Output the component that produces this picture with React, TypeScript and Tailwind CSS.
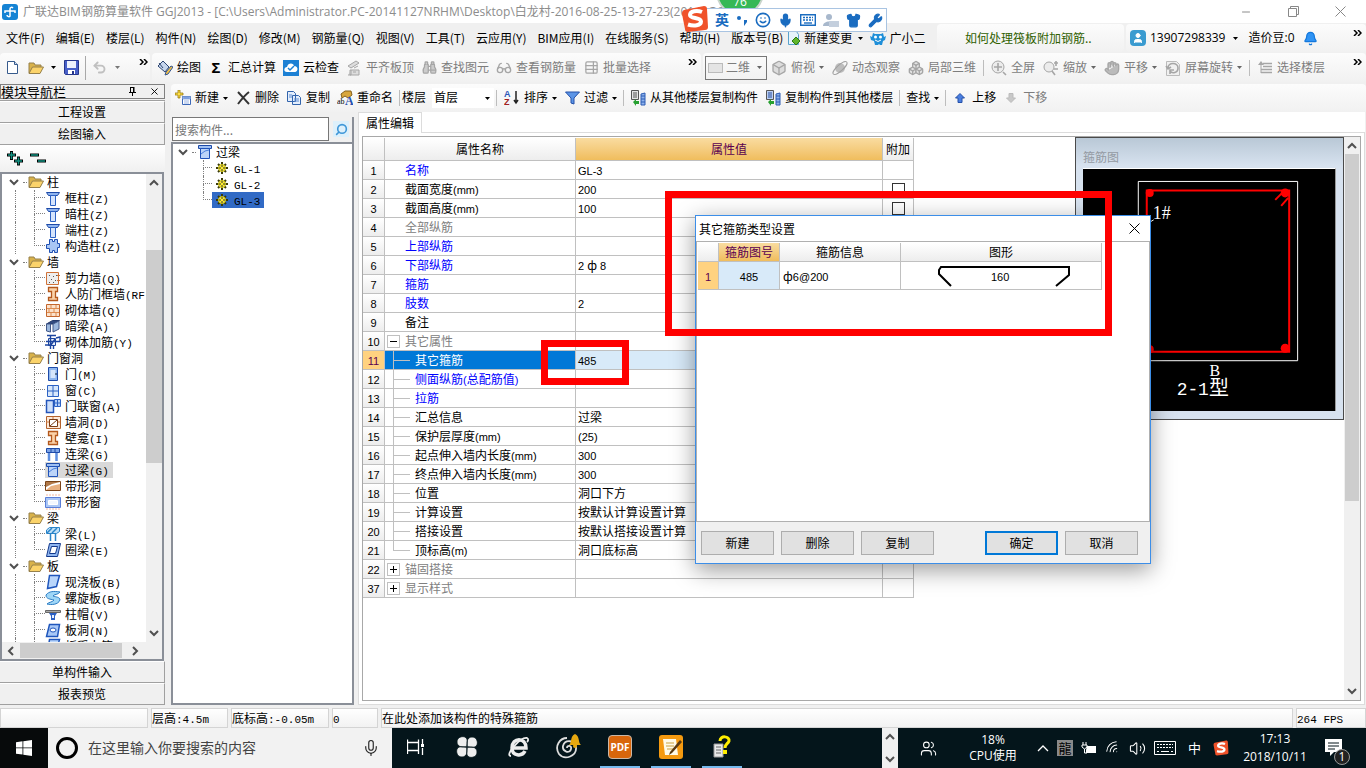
import React, { useState } from 'react';
import { Bell, Binoculars, Box, Boxes, Glasses, Hand, Mic, Minus, Search, Shirt, Smile, TableProperties, Undo2, User, Users, Volume2, Wifi, Wrench, X } from 'lucide-react';

const UI = "font-['Open_Sans','Noto_Sans_CJK_SC',sans-serif]";
const SONG = "font-['Noto_Sans_CJK_SC',sans-serif]";

// half-width characters are set a size smaller than the full-width ones
const Song: React.FC<{ text: string; mono?: boolean }> = ({ text, mono }) => (
  <span className="whitespace-pre">
    {text.split(/([\x20-\x7e]+)/).map((part, i) =>
      i % 2 ? (
        <span key={i} className={mono ? "font-['Liberation_Mono',monospace] text-[11px] leading-none" : "font-['Liberation_Sans',sans-serif] text-[11px] leading-none"}>{part}</span>
      ) : part
    )}
  </span>
);

const Caret: React.FC<{ className?: string }> = ({ className = 'text-black' }) => (
  <svg width="5" height="3" viewBox="0 0 5 3" className={`shrink-0 ${className}`}><path d="M0 0h5L2.5 3z" fill="currentColor" /></svg>
);

const More = () => (
  <svg width="9" height="6" viewBox="0 0 9 6" className="mt-[6px] shrink-0 self-start"><path d="M1 0l3 3-3 3M5 0l3 3-3 3" fill="none" stroke="#000" strokeWidth="1.5" /></svg>
);

const Chevron: React.FC<{ dir?: 'down' | 'up' | 'left' | 'right' }> = ({ dir = 'down' }) => {
  const d = { down: 'M1 3l4 4 4-4', up: 'M1 7l4-4 4 4', left: 'M7 1L3 5l4 4', right: 'M3 1l4 4-4 4' }[dir];
  return <svg width="10" height="10" viewBox="0 0 10 10" className="shrink-0"><path d={d} fill="none" stroke="#505050" strokeWidth="2" /></svg>;
};

const Sep = () => <span className="-mx-px h-4 w-px shrink-0 bg-[#bdbdbd]" />;

const Folder = () => (
  <svg width="16" height="16" viewBox="0 0 16 16" className="shrink-0">
    <path d="M1 13V3h5l1 2h6v3" fill="#d9b24a" stroke="#96804a" />
    <path d="M1 13.5L4.5 7H15.5L12 13.5z" fill="#fbd36a" stroke="#96804a" />
  </svg>
);

type Kind = 'column' | 'gz' | 'wall' | 'iwall' | 'brick' | 'beam' | 'rebar' | 'door' | 'window' | 'doorwin' | 'hole' | 'link' | 'lintel' | 'striphole' | 'stripwin' | 'truss' | 'ring' | 'slab' | 'spiral' | 'cap' | 'slabhole';

const ART: Record<Kind, React.ReactNode> = {
  column: <><path d="M1.5 2.5h13l-2 3h-9z" fill="#8fb4ee" stroke="#1d4aa8" /><path d="M5.5 5.5h5v10h-5z" fill="#d5e4fc" stroke="#2c62c4" /></>,
  gz: <path d="M4.5 1.5h3v2h2v-2h3v4h2v4h-2v5h-3v-2h-2v2h-3v-4h-3v-4h3z" fill="#a9c7f4" stroke="#1f50b4" />,
  wall: <><path d="M1.5 2.5h12v12h-12z" fill="#eee" stroke="#d07238" /><path d="M4 5.5h1M8 6.5h1M6 9.5h1M10 10.5h1M4 12.5h1M8 12.5h1M11 5.5h1" stroke="#555" /><path d="M12 5.5h3M12 10.5h3" stroke="#d07238" /></>,
  iwall: <path d="M3.5 1.5h9v4h-2v6h2v3h-9v-3h3v-6h-3z" fill="#fbd2a8" stroke="#b4581c" strokeWidth="1.3" />,
  brick: <><path d="M1.5 2.5h13v12h-13z" fill="#fbe2cc" stroke="#c4662c" /><path d="M2 6.5h12M2 10.5h12M6 3v3M11 3v3M4 7v3M9 7v3M6 11v3M11 11v3" stroke="#dd8c50" /></>,
  beam: <><path d="M1.5 6l6-3.5h7L8 6z" fill="#304a80" stroke="#25396a" /><path d="M1.5 6h4v8l-4-1zM8 6l6-3v8l-6 3z" fill="#9cb8de" stroke="#42598a" /></>,
  rebar: <><path d="M3.5 4.5h7v7h-7z" fill="#e4eefc" stroke="#1d46a0" /><path d="M2 1.5h9M1 7.5h14M5.5 1v14M8.5 11v4M11 4l4-1v5M0 11h6l4-6" fill="none" stroke="#1d46a0" strokeWidth="1.4" /></>,
  door: <><path d="M3.5 1.5h9v13h-9z" fill="#8db5ee" stroke="#1d4aa8" /><path d="M5.5 4h5v8h-5z" fill="#d6e6fb" /><path d="M10 8h2" stroke="#123" /></>,
  window: <><path d="M2.5 3.5h11v11h-11z" fill="#d8e8fc" stroke="#2c62c4" /><path d="M8 4v10M3 9h10" stroke="#2c62c4" /></>,
  doorwin: <><path d="M1.5 2.5h7v12h-7z" fill="#cfe0fa" stroke="#2455ba" strokeWidth="1.5" /><path d="M9.5 1.5h6v7h-6z" fill="#b6d0f7" stroke="#2c62c4" /><path d="M12.5 1v8M9 5h6" stroke="#2c62c4" /></>,
  hole: <><path d="M1.5 2.5h14v12h-14z" fill="#fde9d8" stroke="#b4622c" /><path d="M4.5 5.5h8v7h-8zM5 12l7-6" fill="#fff" stroke="#7a3c14" /><path d="M1 8h3M13 8h2M8 3v2" stroke="#d07a40" /></>,
  link: <><path d="M1.5 2.5h13v4h-13z" fill="#7da4e6" stroke="#1d4aa8" /><path d="M4 7v8M11.5 7v8" stroke="#5e8fe0" strokeWidth="2.5" /><path d="M6 2v4M10 2v4" stroke="#1d4aa8" /></>,
  lintel: <><path d="M1.5 1.5h13v3h-13z" fill="#9fc0f2" stroke="#1d4aa8" /><path d="M3.5 4.5h9v10h-9z" fill="#bcd4f8" stroke="#1f52b8" /><path d="M4 10l4-3 4-1" stroke="#4a80dc" fill="none" /></>,
  striphole: <><path d="M.5 3.5h15v9h-15z" fill="#fff" stroke="#7a4418" /><path d="M1 9l6-3 8-2H1z" fill="#b07848" /><path d="M1 12l5-4 9-2v6z" fill="#e8b080" /></>,
  stripwin: <><path d="M.5 3.5h15v10h-15z" fill="#aac6f5" stroke="#5a7ed8" /><path d="M3.5 6.5h9v4h-9z" fill="#f2f7ff" stroke="#fff" /><path d="M1 1h14M1 15h14" stroke="#f6b8a0" strokeDasharray="2 1" /></>,
  truss: <><path d="M1.5 4l3-2.5h10v4l-3 2h-10z" fill="#bfe0f8" stroke="#2a84c8" /><path d="M5.5 8v7M10.5 8v7M2 7l5-5M7 7l5-5" stroke="#2a84c8" strokeWidth="1.5" /></>,
  ring: <path d="M4.5 1.5h11l-3 13h-11zM6.5 4.5l-2 7h6l2-7z" fill="#8fb6f0" fillRule="evenodd" stroke="#12388c" />,
  slab: <path d="M4.5 1.5h10l-3 11-9 2z" fill="#b9d6fb" stroke="#1f56bc" strokeWidth="1.5" />,
  spiral: <path d="M1 5c3-4 8-4 14-3-2 3-6 2-7 4 3 1 7 1 7 4-2 5-9 5-13 4 2-2 6-2 7-4C5 9 1 9 1 5z" fill="#9ed6f7" stroke="#2a7cc4" />,
  cap: <><path d="M.5 4.5h15v2h-15z" fill="#aaa" stroke="#666" /><path d="M4 7h8l-2 3v4H6v-4z" fill="#2a5fc4" /><path d="M7 9h2v3H7z" fill="#e8f1ff" /></>,
  slabhole: <><path d="M4.5 2.5h10l-2 12h-11z" fill="#a8c8f7" stroke="#1f56bc" strokeWidth="1.5" /><ellipse cx="8" cy="8" rx="3" ry="2" fill="#fff" stroke="#1f56bc" /></>,
};

const Art: React.FC<{ kind: Kind }> = ({ kind }) => <svg width="16" height="16" viewBox="0 0 16 16" className="shrink-0">{ART[kind]}</svg>;

const TREE: { label: string; items: [string, Kind][] }[] = [
  { label: '柱', items: [['框柱(Z)', 'column'], ['暗柱(Z)', 'column'], ['端柱(Z)', 'column'], ['构造柱(Z)', 'gz']] },
  { label: '墙', items: [['剪力墙(Q)', 'wall'], ['人防门框墙(RF', 'iwall'], ['砌体墙(Q)', 'brick'], ['暗梁(A)', 'beam'], ['砌体加筋(Y)', 'rebar']] },
  { label: '门窗洞', items: [['门(M)', 'door'], ['窗(C)', 'window'], ['门联窗(A)', 'doorwin'], ['墙洞(D)', 'hole'], ['壁龛(I)', 'iwall'], ['连梁(G)', 'link'], ['过梁(G)', 'lintel'], ['带形洞', 'striphole'], ['带形窗', 'stripwin']] },
  { label: '梁', items: [['梁(L)', 'truss'], ['圈梁(E)', 'ring']] },
  { label: '板', items: [['现浇板(B)', 'slab'], ['螺旋板(B)', 'spiral'], ['柱帽(V)', 'cap'], ['板洞(N)', 'slabhole'], ['板受力筋(S)', 'slab']] },
];

interface Prop { no: number; name: string; value?: string; tone?: 'blue' | 'gray'; box?: boolean; group?: '+' | '-'; child?: boolean }

const PROPS: Prop[] = [
  { no: 1, name: '名称', value: 'GL-3', tone: 'blue' },
  { no: 2, name: '截面宽度(mm)', value: '200', box: true },
  { no: 3, name: '截面高度(mm)', value: '100', box: true },
  { no: 4, name: '全部纵筋', tone: 'gray' },
  { no: 5, name: '上部纵筋', tone: 'blue' },
  { no: 6, name: '下部纵筋', value: '2 ф 8', tone: 'blue' },
  { no: 7, name: '箍筋', tone: 'blue' },
  { no: 8, name: '肢数', value: '2', tone: 'blue' },
  { no: 9, name: '备注' },
  { no: 10, name: '其它属性', tone: 'gray', group: '-' },
  { no: 11, name: '其它箍筋', value: '485', child: true },
  { no: 12, name: '侧面纵筋(总配筋值)', tone: 'blue', child: true },
  { no: 13, name: '拉筋', tone: 'blue', child: true },
  { no: 14, name: '汇总信息', value: '过梁', child: true },
  { no: 15, name: '保护层厚度(mm)', value: '(25)', child: true },
  { no: 16, name: '起点伸入墙内长度(mm)', value: '300', child: true },
  { no: 17, name: '终点伸入墙内长度(mm)', value: '300', child: true },
  { no: 18, name: '位置', value: '洞口下方', child: true },
  { no: 19, name: '计算设置', value: '按默认计算设置计算', child: true },
  { no: 20, name: '搭接设置', value: '按默认搭接设置计算', child: true },
  { no: 21, name: '顶标高(m)', value: '洞口底标高', child: true },
  { no: 22, name: '锚固搭接', tone: 'gray', group: '+' },
  { no: 37, name: '显示样式', tone: 'gray', group: '+' },
];

const MENUS = ['文件(F)', '编辑(E)', '楼层(L)', '构件(N)', '绘图(D)', '修改(M)', '钢筋量(Q)', '视图(V)', '工具(T)', '云应用(Y)', 'BIM应用(I)', '在线服务(S)', '帮助(H)', '版本号(B)'];

const Tool: React.FC<{ icon?: React.ReactNode; label: string; drop?: boolean; off?: boolean }> = ({ icon, label, drop, off }) => (
  <button className={`flex shrink-0 items-center gap-1 whitespace-nowrap ${off ? 'text-[#7d7d7d]' : 'text-black'}`}>
    {icon && <span className="flex w-4 shrink-0 justify-center">{icon}</span>}
    {label}
    {drop && <Caret className={off ? 'text-[#666]' : 'text-black'} />}
  </button>
);

const SogouS: React.FC<{ size: number }> = ({ size }) => (
  <svg width={size} height={size} viewBox="0 0 28 28" className="shrink-0">
    <path d="M3 5L23 1c2 0 3 1 3 3l1 18c0 2-1 3-3 3L7 27c-2 0-3-1-3-3L1 9c0-2 0-3 2-4z" fill="#f0522a" />
    <path d="M21 7c-5-2-12-1-12 3 0 4 11 2 11 6.5 0 4-7 5-13 3" fill="none" stroke="#fff" strokeWidth="4" />
  </svg>
);

const CopyFloor: React.FC<{ flip?: boolean }> = ({ flip }) => (
  <svg width="16" height="16" viewBox="0 0 16 16">
    <path d="M1.5.5h7v9h-7z" fill={flip ? '#bcd0f4' : '#e4e4e4'} stroke="#555" /><path d="M3 3h4M3 5h4M3 7h4" stroke={flip ? '#244c9c' : '#555'} />
    <path d="M11 4l4-1v12h-4zM11 6h4M11 9h4M11 12h4" fill="#8db2ec" stroke="#2c5db4" />
    <path d="M3 12l3-3v2h3v3H6v2z" fill="#27a030" />
  </svg>
);

const NavTree = () => {
  const [sel, setSel] = useState('过梁(G)');
  return (
    <ul className="min-w-0 flex-1 overflow-hidden text-[12px] leading-4">
      {TREE.map(g => (
        <li key={g.label}>
          <button className="flex h-4 items-center pl-[7px]">
            <Chevron />
            <span className="ml-1 mr-px w-1 border-t border-dotted border-[#808080]" />
            <Folder />
            <span className="ml-[3px]">{g.label}</span>
          </button>
          <ul>
            {g.items.map(([label, kind], i) => (
              <li key={label} className="flex h-4 pl-[13px]">
                <span className="w-[19px] shrink-0 border-l border-dotted border-[#808080]" />
                <span className="flex w-[11px] shrink-0 flex-col">
                  <span className="h-2 border-b border-l border-dotted border-[#808080]" />
                  {i < g.items.length - 1 && <span className="h-2 border-l border-dotted border-[#808080]" />}
                </span>
                <button onClick={() => setSel(label)} className={`flex items-center gap-1 whitespace-nowrap pr-1 ${sel === label ? 'bg-[#d9d9d9]' : ''}`}>
                  <Art kind={kind} />
                  <Song text={label} mono />
                </button>
              </li>
            ))}
          </ul>
        </li>
      ))}
    </ul>
  );
};

const SideButton: React.FC<{ label: string }> = ({ label }) => (
  <button className="h-[22px] shrink-0 border-b border-r border-t border-b-[#a0a0a0] border-r-[#a0a0a0] border-t-white bg-[#f0f0f0] text-[12px] leading-none">{label}</button>
);

const Sidebar = () => (
  <aside className={`flex w-[165px] shrink-0 flex-col pb-[3px] ${SONG}`}>
    <div className="flex h-[15px] shrink-0 items-center border border-[#808080]">
      <h2 className="flex-1 text-[13px] leading-none">模块导航栏</h2>
      <button aria-label="固定" className="mr-3">
        <svg width="9" height="9" viewBox="0 0 9 9"><path d="M2.5 0v5M2 .5h4M5.5 0v5M1 5.5h7M4.5 6v3" fill="none" stroke="#000" /><path d="M5 0h1.5v5H5z" /></svg>
      </button>
      <button aria-label="关闭" className="mr-1"><X size={11} strokeWidth={2} /></button>
    </div>
    <div className="mt-px flex shrink-0 flex-col border-t border-[#a0a0a0]">
      <SideButton label="工程设置" />
      <SideButton label="绘图输入" />
    </div>
    <div className="flex h-[27px] shrink-0 items-center bg-linear-to-b from-white to-[#f0f0f0] pl-[7px]">
      <svg width="40" height="15" viewBox="0 0 40 15">
        <path d="M0 4h9M4.5 0v9M7 10h9M11.5 5.5v9M23 4h9M30 10h9" stroke="#000" strokeWidth="3" />
        <path d="M1 4h7M4.5 1v7M8 10h7M11.5 6.5v7M24 4h7M31 10h7" stroke="#109080" strokeWidth="1.5" />
      </svg>
    </div>
    <div className="mr-px flex min-h-0 flex-1 flex-col border-2 border-[#8a8f98] bg-white">
      <div className="flex min-h-0 flex-1">
        <NavTree />
        <div className="flex w-4 shrink-0 flex-col items-center bg-[#f0f0f0]">
          <span className="pt-1"><Chevron dir="up" /></span>
          <span className="mt-[62px] h-[213px] w-full shrink-0 bg-[#cdcdcd]" />
          <span className="mt-auto pb-1"><Chevron /></span>
        </div>
      </div>
      <div className="flex h-[17px] shrink-0 items-center bg-[#f0f0f0] pl-1">
        <Chevron dir="left" />
        <span className="ml-1 h-[15px] w-[102px] bg-[#cdcdcd]" />
        <span className="ml-2"><Chevron dir="right" /></span>
      </div>
    </div>
    <div className="flex shrink-0 flex-col">
      <SideButton label="单构件输入" />
      <SideButton label="报表预览" />
    </div>
  </aside>
);

const Gear = () => (
  <svg width="12" height="12" viewBox="0 0 12 12" className="shrink-0">
    <path d="M6 0v12M0 6h12M2 2l8 8M10 2l-8 8" stroke="#3a3a08" strokeWidth="2" />
    <circle cx="6" cy="6" r="3.5" fill="#ffee30" stroke="#c8bc18" /><path d="M6 3v2M6 7v2M3 6h2M7 6h2" stroke="#333" />
  </svg>
);

const ComponentList = () => (
  <section className={`flex w-[183px] shrink-0 flex-col ${SONG}`}>
    <div className="mt-[5px] flex h-[25px] shrink-0 items-start border-r-2 border-[#8a8f98] pl-px">
      <input aria-label="搜索构件" placeholder="搜索构件..." className="h-6 w-[157px] border border-[#777] bg-white px-[2px] text-[12px] placeholder:text-[#777]" />
      <button aria-label="搜索" className="ml-1 mt-1 flex size-4 items-center justify-center bg-[#ddf0fb]"><Search size={13} color="#3f97d8" strokeWidth={3} className="-scale-x-100" /></button>
    </div>
    <div className="min-h-0 flex-1 border-2 border-[#8a8f98] bg-white text-[12px] leading-4">
      <div className="flex h-4 items-center pl-[5px]">
        <Chevron /><span className="ml-1 mr-px w-1 border-t border-dotted border-[#808080]" /><Art kind="lintel" /><span className="ml-[3px]">过梁</span>
      </div>
      <ul>
        {['GL-1', 'GL-2', 'GL-3'].map((n, i) => (
          <li key={n} className="flex h-4 pl-[30px]">
            <span className="flex w-[9px] shrink-0 flex-col">
              <span className="h-2 border-b border-l border-dotted border-[#808080]" />
              {i < 2 && <span className="h-2 border-l border-dotted border-[#808080]" />}
            </span>
            <button className={`flex items-center gap-[6px] px-1 ${i === 2 ? 'bg-[#316ac5]' : ''}`}><Gear /><Song text={n} mono /></button>
          </li>
        ))}
      </ul>
    </div>
  </section>
);

const HEAD = 'border-b border-r border-[#c0c0c0] bg-linear-to-b from-white to-[#ededed] p-0 text-center font-normal';
const HEAD_ON = 'border-b border-r border-[#c0c0c0] bg-linear-to-b from-[#f9dca0] to-[#f0bd5c] p-0 text-center font-normal text-[#5a0050]';
const TONE = { blue: 'text-[#0000ff]', gray: 'text-[#808080]', none: 'text-black' };

const PropTable = () => (
  <table className="mt-px w-[551px] shrink-0 table-fixed border-separate border-spacing-0 self-start text-[12px] leading-4">
    <colgroup><col className="w-[22px]" /><col className="w-[191px]" /><col className="w-[307px]" /><col className="w-[31px]" /></colgroup>
    <thead>
      <tr className="h-[23px]"><th className={HEAD} /><th className={HEAD}>属性名称</th><th className={HEAD_ON}>属性值</th><th className={HEAD}>附加</th></tr>
    </thead>
    <tbody>
      {PROPS.map(p => {
        const on = p.no === 11;
        return (
          <tr key={p.no} className="h-[19px]">
            <th className={on ? 'border-b border-r border-[#c0c0c0] bg-[#ffd280] p-0 font-normal text-[#5a0050]' : HEAD}><Song text={String(p.no)} /></th>
            <td className={`h-[19px] border-b border-r border-[#c0c0c0] p-0 ${on ? 'bg-[#0078d7] text-white' : TONE[p.tone ?? 'none']}`}>
              <div className="flex h-[18px] items-center">
                {p.group && <span className="ml-[2px] mr-[5px] flex size-[13px] items-center justify-center border border-[#c0c0c0]">
                  <svg width="7" height="7" viewBox="0 0 7 7"><path d={p.group === '+' ? 'M0 3.5h7M3.5 0v7' : 'M0 3.5h7'} stroke="#000" /></svg>
                </span>}
                {p.child && (
                  <span className="ml-2 mr-[5px] flex h-full w-[17px] flex-col">
                    <span className="h-[10px] border-b border-l border-[#c0c0c0]" />
                    {p.no !== 21 && <span className="h-2 border-l border-[#c0c0c0]" />}
                  </span>
                )}
                {!p.group && !p.child && <span className="w-5" />}
                <Song text={p.name} />
              </div>
            </td>
            <td className={`border-b border-r border-[#c0c0c0] p-0 pl-[2px] ${on ? 'bg-[#d8eaf9]' : ''}`}>{p.value && <Song text={p.value} />}</td>
            <td className="border-b border-r border-[#c0c0c0] p-0">
              {p.box && <input type="checkbox" aria-label={p.name} className="mx-auto block size-[13px] appearance-none border border-[#333] bg-white" />}
            </td>
          </tr>
        );
      })}
    </tbody>
  </table>
);

const StirrupView = () => (
  <figure className="flex h-[283px] w-[269px] shrink-0 flex-col border border-[#4a4a4a] bg-[#d7e2ef] bg-linear-to-b from-[#b9c8d6] to-[#d7e2ef] to-10% px-[7px]">
    <figcaption className="h-[30px] pt-[11px] text-[12px] leading-4 text-[#949aa2]">箍筋图</figcaption>
    <svg width="253" height="243" viewBox="0 0 253 243" className="border-r border-t border-r-[#999] border-t-white bg-black">
      <path d="M55.5 12.5h160v180h-160z" fill="none" stroke="#fff" />
      <path d="M64 21.5h143v162H64z" fill="none" stroke="#f00" strokeWidth="2" />
      <g fill="#f00"><circle cx="67" cy="24" r="4" /><circle cx="203" cy="24" r="4.5" /><circle cx="67" cy="181" r="4" /><circle cx="203" cy="180" r="4.5" /></g>
      <path d="M193 31l8-8M199 37l7-8" stroke="#f00" strokeWidth="2" />
      <path d="M66 54l5-3" stroke="#fff" />
      <g fill="#fff" fontFamily="'Liberation Serif','Noto Sans CJK SC',serif">
        <text x="70" y="50" fontSize="18">1#</text>
        <text x="127" y="208" fontSize="16">B</text>
        <text x="94" y="227" fontSize="20"><tspan fontFamily="'Liberation Mono',monospace" fontSize="18">2-1</tspan>型</text>
      </g>
    </svg>
  </figure>
);

const DlgButton: React.FC<{ label: string; primary?: boolean }> = ({ label, primary }) => (
  <button className={`h-6 w-[73px] bg-[#e1e1e1] text-[12px] leading-none ${primary ? 'border-2 border-[#0078d7]' : 'border border-[#adadad]'}`}>{label}</button>
);

const StirrupDialog = () => (
  <div role="dialog" aria-label="其它箍筋类型设置" className={`absolute left-[695px] top-[215px] z-10 flex h-[349px] w-[456px] flex-col border border-[#3c8ee8] bg-[#f0f0f0] shadow-[0_6px_22px_rgba(0,0,0,0.4)] ${SONG}`}>
    <div className="flex h-[25px] items-center bg-white pl-[3px] pr-[10px] text-[12px]">
      <span className="flex-1">其它箍筋类型设置</span>
      <button aria-label="关闭"><svg width="11" height="11" viewBox="0 0 11 11"><path d="M.5.5l10 10M10.5.5l-10 10" stroke="#000" /></svg></button>
    </div>
    <div className="flex-1 border border-[#b0b0b0] bg-white pl-px pt-px">
      <table className="w-[404px] table-fixed border-separate border-spacing-0 text-[12px] leading-4">
        <colgroup><col className="w-[21px]" /><col className="w-[61px]" /><col className="w-[121px]" /><col className="w-[201px]" /></colgroup>
        <thead><tr className="h-[19px]"><th className={HEAD} /><th className={HEAD_ON}>箍筋图号</th><th className={HEAD}>箍筋信息</th><th className={HEAD}>图形</th></tr></thead>
        <tbody>
          <tr className="h-7">
            <th className="border-b border-r border-[#c0c0c0] bg-[#ffd280] p-0 font-normal text-[#5a0050]"><Song text="1" /></th>
            <td className="border-b border-r border-[#c0c0c0] bg-[#d8eaf9] p-0 text-center"><Song text="485" /></td>
            <td className="border-b border-r border-[#c0c0c0] p-0 pl-[3px]"><Song text="ф6@200" /></td>
            <td className="border-b border-r border-[#c0c0c0] p-0">
              <svg width="200" height="26" viewBox="0 0 200 26" className="block">
                <path d="M50 23L38 11V7l2-3h128v8l-13 11" fill="none" stroke="#000" strokeWidth="2" />
                <text x="90" y="18" fontSize="11" fontFamily="'Liberation Sans',sans-serif">160</text>
              </svg>
            </td>
          </tr>
        </tbody>
      </table>
    </div>
    <div className="flex h-[41px] items-center gap-[7px] pl-[5px] pr-3">
      <DlgButton label="新建" /><DlgButton label="删除" /><DlgButton label="复制" />
      <span className="flex-1" />
      <DlgButton label="确定" primary /><DlgButton label="取消" />
    </div>
  </div>
);

const ImeBar = () => (
  <div className={`absolute left-[681px] top-0 z-10 ${UI}`}>
    <div className="ml-[35px] h-[18px] w-12 overflow-hidden">
      <div className="-mt-8 flex size-12 items-end justify-center rounded-full border-2 border-[#c9d4cb] bg-[#35b856] pb-1 text-[12px] leading-4 text-white">76</div>
    </div>
    <div className="absolute left-[11px] top-2 flex h-6 w-[195px] items-center gap-[7px] border border-[#a9c4e2] bg-white pl-[22px] text-[#1a6cc0]">
      <span className="text-[14px] font-bold leading-none">英</span>
      <svg width="12" height="12" viewBox="0 0 12 12" fill="currentColor"><circle cx="3" cy="4" r="2" /><path d="M8 6h3v2l-3 4z" /></svg>
      <Smile size={16} strokeWidth={2.4} />
      <Mic size={15} strokeWidth={2.5} fill="currentColor" />
      <svg width="16" height="12" viewBox="0 0 16 12" fill="none" stroke="currentColor" strokeWidth="1.4"><path d="M.7.7h14.6v10.6H.7z" /><path d="M3 3.5h10M3 6h10" strokeDasharray="2 1" /><path d="M4 9h8" /></svg>
      <svg width="16" height="15" viewBox="0 0 16 15" fill="#a8b8cc"><circle cx="6" cy="4" r="3" /><path d="M0 13c0-6 12-6 12 0z" /><path d="M6 8h10v6H6z" fill="#c4cfdd" /></svg>
      <Shirt size={15} fill="currentColor" />
      <Wrench size={15} fill="currentColor" />
    </div>
    <div className="absolute left-0 top-[5px]"><SogouS size={28} /></div>
  </div>
);

const TitleBar = () => (
  <header className="flex h-[23px] shrink-0 items-center bg-white pl-[2px] text-[12px] text-[#8c8c8c]">
    <svg width="16" height="16" viewBox="0 0 16 16" className="shrink-0"><rect width="16" height="16" rx="3" fill="#1583d4" /><path d="M3 9V7h10v2M8 12V5c0-2 2-2 3-1M5 11c0 2 3 2 3 1" fill="none" stroke="#fff" strokeWidth="1.5" /></svg>
    <h1 className="ml-[5px] min-w-0 flex-1 overflow-hidden whitespace-nowrap">广联达BIM钢筋算量软件 GGJ2013 - [C:\Users\Administrator.PC-20141127NRHM\Desktop\白龙村-2016-08-25-13-27-23(2014).GGJ12]</h1>
    <button aria-label="最小化" className="mr-9"><Minus size={12} /></button>
    <button aria-label="还原" className="mr-9"><svg width="11" height="11" viewBox="0 0 11 11"><path d="M.5 2.5h8v8h-8zM2.5 2V.5h8v8H9" fill="none" stroke="#888" /></svg></button>
    <button aria-label="关闭" className="mr-5"><svg width="11" height="11" viewBox="0 0 11 11"><path d="M.5.5l10 10M10.5.5l-10 10" stroke="#888" /></svg></button>
  </header>
);

const BAR = 'bg-linear-to-b from-[#fcfcfc] to-[#f1f1f1] rounded-sm';

const MenuBar = () => (
  <nav className="flex h-[30px] shrink-0 items-center text-[12px]">
    <div className={`flex flex-1 items-center gap-[11px] pl-[6px] ${SONG}`}>
      {MENUS.map(m => <button key={m} className="whitespace-nowrap">{m}</button>)}
      <button className="-ml-2 flex items-center gap-[2px] whitespace-nowrap">
        <svg width="16" height="16" viewBox="0 0 16 16"><path d="M2.5 1.5h8l2 3v10h-10z" fill="#e6f3fb" stroke="#5aa2cc" /><path d="M10 7l4 4-4 4-4-4z" fill="#5fb62c" stroke="#2d7a14" /></svg>
        新建变更<span className="ml-1"><Caret /></span>
      </button>
      <button className="-ml-1 flex items-center gap-[3px] whitespace-nowrap">
        <svg width="16" height="16" viewBox="0 0 16 16"><path d="M3 3l2 1h6l2-1 1 4 2-1-1 4-2 1-1 4h-2l-1-1-1 1H5l-1-4-3-1-1-4 2 1z" fill="#1f8fd8" /><circle cx="5.5" cy="7" r="1.5" fill="#fff" /><circle cx="10.5" cy="7" r="1.5" fill="#fff" /><path d="M5 10q3 3 6 0" stroke="#fff" fill="none" /></svg>
        广小二
      </button>
    </div>
    <div className={`mr-[2px] flex h-7 w-[187px] shrink-0 items-center pl-7 ${BAR}`}><a href="#tip" className={`text-[#2f6000] ${SONG}`}>如何处理筏板附加钢筋..</a></div>
    <div className={`flex h-7 w-[240px] shrink-0 items-center pl-1 ${BAR}`}>
      <span className="flex size-4 items-center justify-center rounded-sm bg-[#3a9bd0]"><User size={12} color="#fff" fill="#fff" /></span>
      <button className="ml-1 flex items-center gap-2">13907298339<Caret /></button>
      <span className="ml-[10px]">造价豆:0</span>
      <Bell size={15} color="#1478dc" fill="#2f93f4" className="ml-2" />
      <span className="ml-auto mr-1 flex self-stretch"><More /></span>
    </div>
  </nav>
);

const G = '#a6a6a6';

const MainToolbar = () => (
  <div className="flex h-[30px] shrink-0 gap-[2px] pb-px text-[12px]">
    <div className={`flex w-[150px] shrink-0 items-center pl-[6px] ${BAR}`}>
      <svg width="13" height="15" viewBox="0 0 13 15"><path d="M1.5 1.5h7l3 3v9h-10z" fill="#fff" stroke="#365a8c" /><path d="M8.5 1.5v3h3" fill="#cfdcf0" stroke="#365a8c" /></svg>
      <span className="ml-[9px]"><Folder /></span>
      <span className="ml-[7px]"><Caret /></span>
      <svg width="15" height="15" viewBox="0 0 15 15" className="ml-2"><path d="M.5.5h14v14h-13l-1-1z" fill="#4860c8" stroke="#26368c" /><path d="M3 1h9v7H3z" fill="#eef2fc" /><path d="M4 10h7v4H4z" fill="#fff" /><path d="M8 11h2v3H8z" fill="#26368c" /></svg>
      <span className="mx-[6px] h-6 w-px bg-[#a8a8a8]" />
      <Undo2 size={15} color="#c0c0c0" strokeWidth={3} />
      <span className="ml-2"><Caret className="text-[#777]" /></span>
      <span className="ml-auto mr-[2px] flex self-stretch"><More /></span>
    </div>
    <div className={`flex w-[549px] shrink-0 items-center gap-[7px] pl-[5px] ${BAR}`}>
      <Tool label="绘图" icon={<svg width="16" height="16" viewBox="0 0 16 16"><path d="M1 6l5-5 6 6-4 5z" fill="#c7d6ec" stroke="#2c4470" /><path d="M2 3l4 5" stroke="#2c4470" /><path d="M8 15l1-3 5-6 2 1-5 7z" fill="#efbf48" stroke="#35568f" /></svg>} />
      <Tool label="汇总计算" icon={<span className="text-[15px] font-bold leading-none">Σ</span>} />
      <Tool label="云检查" icon={<svg width="16" height="16" viewBox="0 0 16 16"><path d="M0 0h16v16H0z" fill="#1c80d4" /><path d="M4 12c-4 0-3-5 0-5 1-5 7-4 7-1 5 0 4 6 1 6z" fill="#fff" /><path d="M5 8l2 2 4-4" fill="none" stroke="#1c80d4" strokeWidth="1.5" /></svg>} />
      <Tool off label="平齐板顶" icon={<svg width="16" height="16" viewBox="0 0 16 16"><path d="M2 6l8-5 3 2-8 5zM4 10h9v5H4zM2 15h3v-5M7 12h3M8 8l4-2" fill="#ddd" stroke={G} /></svg>} />
      <Tool off label="查找图元" icon={<Binoculars size={15} color={G} fill="#ccc" />} />
      <Tool off label="查看钢筋量" icon={<Glasses size={16} color={G} />} />
      <Tool off label="批量选择" icon={<TableProperties size={15} color={G} />} />
      <span className="ml-auto mr-1 flex self-stretch"><More /></span>
    </div>
    <div className={`flex min-w-0 flex-1 items-center pl-[2px] ${BAR}`}>
      <button className="mr-1 flex h-6 w-[62px] items-center gap-[3px] border border-[#777] pl-[2px] text-[#7d7d7d]">
        <span className="h-[10px] w-[15px] border border-[#bbb] bg-[#e4e4e4]" />二维<span className="ml-1"><Caret className="text-[#666]" /></span>
      </button>
      <div className="flex min-w-0 flex-1 items-center gap-2">
        <Tool off drop label="俯视" icon={<Box size={16} color={G} fill="#ddd" />} />
        <Tool off label="动态观察" icon={<svg width="16" height="16" viewBox="0 0 16 16"><circle cx="8" cy="8" r="5" fill="#bdbdbd" /><ellipse cx="8" cy="8" rx="9" ry="3" transform="rotate(-42 8 8)" fill="none" stroke="#a0a0a0" /></svg>} />
        <Tool off label="局部三维" icon={<Boxes size={16} color={G} fill="#e4e4e4" />} />
        <Sep />
        <Tool off label="全屏" icon={<svg width="16" height="16" viewBox="0 0 16 16"><circle cx="7" cy="7" r="6" fill="#ececec" stroke={G} /><path d="M7 3v8M3 7h8M12 12l3 3" stroke={G} strokeWidth="1.6" /></svg>} />
        <Tool off drop label="缩放" icon={<svg width="16" height="16" viewBox="0 0 16 16"><circle cx="6" cy="7" r="5" fill="#ececec" stroke={G} /><path d="M9 11l3 4M13 1v5M11 3h4M11 9h4" stroke={G} strokeWidth="1.6" /></svg>} />
        <Tool off drop label="平移" icon={<Hand size={16} color={G} fill="#bbb" />} />
        <Tool off drop label="屏幕旋转" icon={<svg width="16" height="16" viewBox="0 0 16 16"><path d="M1.5 1.5h10l3 3v11h-13z" fill="#f0f0f0" stroke="#bbb" /><path d="M3 8c0-6 10-6 10 0 0 5-6 6-8 3M1 6l2 3 3-2M5 14v-4h4" fill="none" stroke={G} strokeWidth="1.6" /></svg>} />
        <Sep />
        <Tool off label="选择楼层" icon={<svg width="15" height="14" viewBox="0 0 15 14"><path d="M5 2.5h9M5 5.5h9M3 8.5h11M3 11.5h11" stroke={G} strokeWidth="1.5" /><path d="M0 4l3-4 3 4z" fill={G} /><path d="M3 3v9" stroke={G} /></svg>} />
      </div>
      <span className="mr-1 flex self-stretch"><More /></span>
    </div>
  </div>
);

const EditToolbar = () => (
  <div className={`flex h-[28px] shrink-0 items-center gap-[7px] pl-1 text-[12px] ${BAR}`}>
    <Tool drop label="新建" icon={<svg width="16" height="16" viewBox="0 0 16 16"><path d="M7.5 6.5h8v8h-8z" fill="#fff" stroke="#3c68b8" /><path d="M8 7h7v2H8zM9 11h5M9 13h5" fill="#5c88d8" stroke="#9ab4e4" /><path d="M3 0h2v3h3v2H5v3H3V5H0V3h3z" fill="#ffe048" stroke="#8a6a00" strokeWidth=".7" /></svg>} />
    <Tool label="删除" icon={<svg width="13" height="14" viewBox="0 0 13 14"><path d="M1 1c3 3 7 8 11 12M12 1C8 4 4 9 1 13" fill="none" stroke="#333" strokeWidth="2" /></svg>} />
    <Tool label="复制" icon={<svg width="16" height="16" viewBox="0 0 16 16"><path d="M1.5 1.5h6l2 2v8h-8zM6.5 5.5h6l2 2v7h-8z" fill="#e4eefc" stroke="#3264ac" /><path d="M3 5h3M3 7h3M8 9h5M8 11h5" stroke="#5c8cd0" /></svg>} />
    <Tool label="重命名" icon={<svg width="16" height="16" viewBox="0 0 16 16"><path d="M4 4l4-3h6l1 4-4 3-3-2-3 2z" fill="#d8a63c" stroke="#84601c" /><text x="0" y="14" fontSize="8" fontFamily="'Liberation Serif',serif">ab</text><text x="8" y="15" fontSize="12" fontWeight="bold" fill="#2450b0" fontFamily="'Liberation Serif',serif">A</text></svg>} />
    <Sep />
    <label className="-ml-1 flex items-center gap-[6px] whitespace-nowrap">
      楼层
      <span className="relative flex items-center">
        <select className="h-5 w-[62px] appearance-none bg-white pl-[2px] text-[12px] leading-5"><option>首层</option></select>
        <span className="pointer-events-none absolute right-1"><Caret /></span>
      </span>
    </label>
    <span className="-ml-1 flex"><Sep /></span>
    <Tool drop label="排序" icon={<svg width="16" height="16" viewBox="0 0 16 16"><g fontSize="9" fontWeight="bold" fontFamily="'Liberation Sans',sans-serif"><text x="0" y="7" fill="#2c56b8">A</text><text x="0" y="15" fill="#a02020">Z</text></g><path d="M12 1v12M10 10l2 3 2-3" fill="none" stroke="#222" strokeWidth="1.5" /></svg>} />
    <Tool drop label="过滤" icon={<svg width="15" height="14" viewBox="0 0 15 14"><path d="M.5 1h14L9 7v6l-3-1V7z" fill="#5b94e6" stroke="#2450a8" /></svg>} />
    <Sep />
    <Tool label="从其他楼层复制构件" icon={<CopyFloor />} />
    <Tool label="复制构件到其他楼层" icon={<CopyFloor flip />} />
    <Sep />
    <Tool drop label="查找" />
    <Sep />
    <Tool label="上移" icon={<svg width="10" height="10" viewBox="0 0 10 10"><path d="M5 .5L9.5 5H7v4.5H3V5H.5z" fill="#4a7ee0" stroke="#2450a8" /></svg>} />
    <Tool off label="下移" icon={<svg width="10" height="10" viewBox="0 0 10 10"><path d="M5 9.5L.5 5H3V.5h4V5h2.5z" fill="#c8c8c8" stroke="#bbb" /></svg>} />
  </div>
);

const StatusBar = () => (
  <footer className={`flex h-5 shrink-0 gap-[3px] text-[12px] leading-4 ${SONG}`}>
    {[['', 'w-[148px]'], ['层高:4.5m', 'w-[77px]'], ['底标高:-0.05m', 'w-[98px]'], ['0', 'w-[46px]'], ['在此处添加该构件的特殊箍筋', 'flex-1'], ['264 FPS', 'w-[70px]']].map(([t, w]) => (
      <span key={t} className={`${w} whitespace-nowrap border border-[#d4d4d4] bg-linear-to-b from-white to-[#f2f2f2] pt-px`}><Song text={t} mono /></span>
    ))}
  </footer>
);

const TaskIcon: React.FC<{ label: string; active?: boolean; children: React.ReactNode }> = ({ label, active, children }) => (
  <button aria-label={label} className={`flex h-full w-10 items-center justify-center border-b-2 ${active ? 'border-[#76b9ed]' : 'border-transparent'}`}>{children}</button>
);

const Taskbar = () => (
  <div className={`flex h-10 shrink-0 items-center bg-[#04151b] text-white ${UI}`}>
    <button aria-label="开始" className="flex h-full w-12 items-center justify-center bg-[#070a0b]">
      <svg width="16" height="16" viewBox="0 0 16 16"><path d="M0 2.2l6.5-.9v6.2H0zM7.3 1.2L16 0v7.5H7.3zM0 8.300h6.5v6.3L0 13.700zM7.3 8.300H16V16l-8.700-1.200z" fill="#fff" /></svg>
    </button>
    <label className="flex h-full w-[344px] items-center bg-[#f2f2f2] pl-2 text-black">
      <span className="size-[22px] rounded-full border-[3px] border-black" />
      <input aria-label="搜索" placeholder="在这里输入你要搜索的内容" className="ml-[10px] min-w-0 flex-1 text-[14px] leading-5 placeholder:text-[#444]" />
      <Mic size={18} strokeWidth={1.5} className="mr-3 text-[#222]" />
    </label>
    <div className="ml-1 flex h-full items-center gap-[11px]">
      <TaskIcon label="任务视图"><svg width="18" height="16" viewBox="0 0 18 16"><path d="M.5 3V.5M.5 3.5h11v8H.5zM11.5 3V.5M.5 12v3M11.5 12v3M15.5 0v5M15.5 9v7" fill="none" stroke="#fff" strokeWidth="1.3" /><path d="M14 5h3v3h-3z" fill="#fff" /></svg></TaskIcon>
      <TaskIcon label="风车"><svg width="22" height="22" viewBox="0 0 22 22" fill="#eee"><path d="M10.5 10.5C7 12 1 11 1 6s5-6 8-5c3 2 3 6 1.5 9.5zM11.5 10.5C10 7 11 1 16 1s6 5 5 8c-2 3-6 3-9.5 1.5zM11.5 11.5C15 10 21 11 21 16s-5 6-8 5c-3-2-3-6-1.5-9.5zM10.5 11.5C12 15 11 21 6 21s-6-5-5-8c2-3 6-3 9.5-1.5z" stroke="#04151b" strokeWidth=".8" /></svg></TaskIcon>
      <TaskIcon label="浏览器"><svg width="24" height="24" viewBox="0 0 24 24" fill="none" stroke="#eee"><path d="M5 13h15c0-11-14-11-14 0 0 8 10 9 13 3" strokeWidth="3.5" /><path d="M5 21C-2 21 14 2 21 3c2 1 1 3 0 4" strokeWidth="1.8" /></svg></TaskIcon>
      <TaskIcon label="提醒"><svg width="28" height="26" viewBox="0 0 28 26" fill="none"><path d="M12 14c0-3 5-3 4 1-1 5-9 3-8-3 2-7 12-6 13 1 1 9-11 14-17 7C-1 12 5 4 12 4" stroke="#ddd" strokeWidth="1.8" /><path d="M14 11c3-2 1-9 6-11 5 2 3 9 6 11z" fill="#e8a810" /><circle cx="20" cy="12" r="2" fill="#e8a810" /></svg></TaskIcon>
      <TaskIcon label="PDF" active><span className="flex size-6 items-center justify-center rounded-sm border border-[#c9b8a8] bg-[#d8660c] text-[10px] font-bold leading-none">PDF</span></TaskIcon>
      <TaskIcon label="记事" active><svg width="24" height="24" viewBox="0 0 24 24"><rect width="24" height="24" rx="3" fill="#f59a10" /><path d="M4 4h13l2 16H6z" fill="#fffbe8" /><path d="M7 8h8M7 11h8M8 14h6" stroke="#c8a040" /><path d="M21 5L11 17l-1 3 3-2L23 7z" fill="#5a3a10" /></svg></TaskIcon>
      <TaskIcon label="帮助" active><svg width="20" height="24" viewBox="0 0 20 24"><path d="M2 9h9v13H2z" fill="#e8e8e8" stroke="#999" /><path d="M4 12h5M4 15h5M4 18h5" stroke="#666" /><path d="M8 6c0-6 10-5 9 0-1 3-4 3-4 7" fill="none" stroke="#ffee00" strokeWidth="3" /><path d="M11 15h4v4h-4z" fill="#ffee00" /></svg></TaskIcon>
    </div>
    <span className="flex-1" />
    <div className="flex h-full w-4 flex-col items-center justify-between bg-[#f0f0f0] py-1"><Chevron dir="up" /><Chevron /></div>
    <Users size={17} className="ml-[22px]" strokeWidth={1.5} />
    <div className="ml-6 w-16 text-center text-[12px] leading-4"><div>18%</div><div className="whitespace-nowrap">CPU使用</div></div>
    <div className="ml-3 flex items-center gap-2">
      <svg width="12" height="7" viewBox="0 0 12 7"><path d="M1 6l5-5 5 5" fill="none" stroke="#fff" strokeWidth="1.3" /></svg>
      <span className="flex size-4 items-center justify-center bg-[#8a8a8a] text-[13px] leading-none text-black">龍</span>
      <svg width="16" height="12" viewBox="0 0 16 12"><path d="M6 4h9v7H5V8" fill="#fff" /><path d="M2 0v3M5 0v3M1 3h5v2L3.5 7 1 5zM3.5 7v4H6" fill="none" stroke="#fff" /></svg>
      <Wifi size={16} strokeWidth={1.5} className="-rotate-45" />
      <Volume2 size={17} strokeWidth={1.5} />
      <svg width="22" height="14" viewBox="0 0 22 14" fill="none" stroke="#fff"><path d="M.5.5h21v13H.5z" /><path d="M3 3.5h16M3 6.5h16" strokeDasharray="2 1" /><path d="M3 10.5h2M7 10.5h8M17 10.5h2" /></svg>
      <span className="ml-1 text-[13px] leading-none">中</span>
      <span className="ml-1 flex"><SogouS size={16} /></span>
    </div>
    <div className="ml-[6px] w-20 text-center text-[12px] leading-[18px]"><div>17:13</div><div>2018/10/11</div></div>
    <button aria-label="通知" className="relative ml-[3px] mr-4 flex w-8 justify-center">
      <svg width="18" height="18" viewBox="0 0 18 18"><path d="M0 0h17v13H9l-4 4v-4H0z" fill="#fff" /><path d="M3 4h11M3 7h11M3 10h7" stroke="#04151b" /></svg>
      <span className="absolute -bottom-2 left-4 flex size-4 items-center justify-center rounded-full border border-[#999] bg-[#222] text-[12px] leading-none">1</span>
    </button>
  </div>
);

export default function App() {
  return (
    <div className={`relative flex h-screen flex-col overflow-hidden bg-[#f0f0f0] text-black ${UI}`}>
      <TitleBar />
      <MenuBar />
      <MainToolbar />
      <div className="flex min-h-0 flex-1 gap-[6px] pt-px">
        <Sidebar />
        <div className="flex min-w-0 flex-1 flex-col">
          <EditToolbar />
          <div className="flex min-h-0 flex-1 gap-1 pb-[3px]">
            <ComponentList />
            <section className={`mr-px flex min-w-0 flex-1 flex-col ${SONG}`}>
              <div className="flex h-[21px] shrink-0 border-b border-[#dcdcdc] bg-white">
                <button className="-mb-px h-[21px] w-16 border-x border-t border-[#dcdcdc] bg-white text-[12px] leading-none">属性编辑</button>
              </div>
              <div className="flex min-h-0 flex-1 border-x border-b border-[#dcdcdc] bg-white px-[3px] pb-[3px] pt-[3px]">
                <div className="flex min-w-0 flex-1 border border-[#a8a8a8]">
                  <PropTable />
                  <span className="flex-1" />
                  <StirrupView />
                  <div className="flex w-4 shrink-0 flex-col items-center bg-[#f0f0f0]">
                    <span className="pt-1"><Chevron dir="up" /></span>
                    <span className="mt-[3px] h-[347px] w-[14px] bg-[#cdcdcd]" />
                    <span className="mt-auto pb-1"><Chevron /></span>
                  </div>
                </div>
              </div>
            </section>
          </div>
        </div>
      </div>
      <StatusBar />
      <Taskbar />
      <StirrupDialog />
      <ImeBar />
      <div className="pointer-events-none absolute left-[665px] top-[191px] z-20 h-[145px] w-[447px] border-[7px] border-[#ff0000]" />
      <div className="pointer-events-none absolute left-[541px] top-[340px] z-20 h-[45px] w-[88px] border-[7px] border-[#ff0000]" />
    </div>
  );
}
